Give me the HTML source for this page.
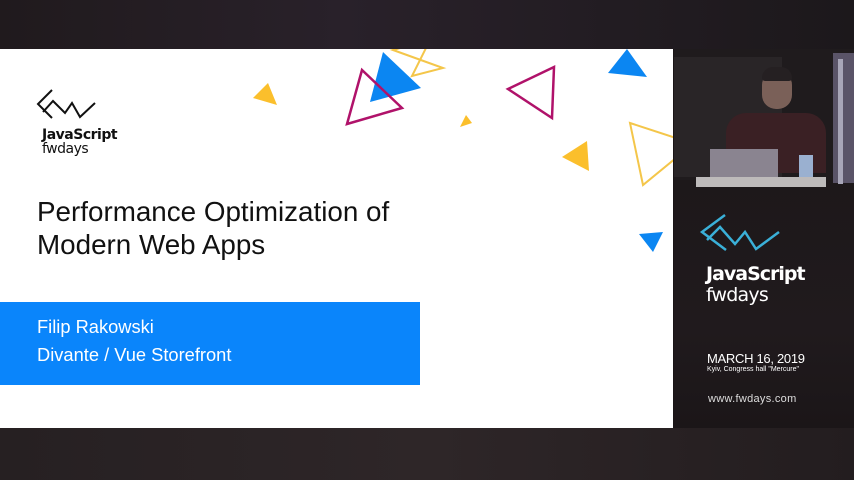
<!DOCTYPE html>
<html><head><style>
body{margin:0;width:854px;height:480px;overflow:hidden;background:#1a1517;font-family:"Liberation Sans",sans-serif;position:relative}
.a{position:absolute}
</style></head><body>
<div class="a" style="left:0;top:0;width:854px;height:49px;background:linear-gradient(90deg,#201a1d,#29212a 40%,#1c181b)"></div>
<div class="a" style="left:0;top:428px;width:854px;height:52px;background:linear-gradient(90deg,#262022,#2e2628 50%,#231d1f)"></div>
<div class="a" style="left:674px;top:180px;width:180px;height:248px;background:linear-gradient(180deg,#1d181a,#201a1d 60%,#1b1618)"></div>
<!-- video -->
<div class="a" style="left:674px;top:49px;width:180px;height:131px;background:#1f1b1d">
 <div class="a" style="left:0;top:8px;width:108px;height:120px;background:#292527"></div>
 <div class="a" style="left:159px;top:4px;width:21px;height:130px;background:#5a5468"></div>
 <div class="a" style="left:164px;top:10px;width:5px;height:125px;background:#a8a6b8"></div>
 <div class="a" style="left:88px;top:22px;width:30px;height:38px;border-radius:14px;background:#7a6058"></div>
 <div class="a" style="left:88px;top:18px;width:30px;height:14px;border-radius:14px 14px 4px 4px;background:#252022"></div>
 <div class="a" style="left:52px;top:64px;width:100px;height:60px;border-radius:20px 20px 0 0;background:#3a2024"></div>
 <div class="a" style="left:36px;top:100px;width:68px;height:30px;background:#8a8490"></div>
 <div class="a" style="left:125px;top:106px;width:14px;height:22px;background:#9ab0d0"></div>
 <div class="a" style="left:22px;top:128px;width:130px;height:10px;background:#bdbaba"></div>
</div>
<!-- slide -->
<div class="a" style="left:0;top:49px;width:673px;height:379px;background:#fff;overflow:hidden"></div>
<svg class="a" style="left:0;top:0" width="854" height="480">
 <defs><clipPath id="c"><rect x="0" y="49" width="673" height="379"/></clipPath></defs>
 <g clip-path="url(#c)">
 <polygon points="253,98 268,83 277,105" fill="#fbbf2c"/>
 <polygon points="393,50 443,68 412,76 430,40" fill="none" stroke="#f4c64a" stroke-width="2"/>
 <polygon points="370,102 383,52 421,88" fill="#0b86f2"/>
 <polygon points="362,70 402,108 347,124" fill="none" stroke="#b0126a" stroke-width="2.5"/>
 <polygon points="460,127 466,115 472,123" fill="#fbbf2c"/>
 <polygon points="508,89 554,67 552,118" fill="none" stroke="#b0126a" stroke-width="2.5"/>
 <polygon points="608,73 627,49 647,77" fill="#0b86f2"/>
 <polygon points="562,157 587,141 589,171" fill="#fbbf2c"/>
 <polygon points="630,123 676,138 676,158 643,185" fill="none" stroke="#f4c64a" stroke-width="2"/>
 <polygon points="639,234 663,232 653,252" fill="#0b86f2"/>
 <path d="M52,90 L38,104 L52,118 M43,112 L53,101 L65,113 L72,103 L80,117 L95,103" fill="none" stroke="#111" stroke-width="2"/>
 </g>
 <path d="M725,215 L702,232 L726,250 M707,240 L720,227 L735,244 L745,232 L756,249 L779,232" fill="none" stroke="#3ab0d8" stroke-width="2.5"/>
</svg>
<div class="a" style="left:42px;top:127px;font-size:14px;font-weight:bold;color:#111;font-family:'DejaVu Sans',sans-serif;letter-spacing:-0.5px">JavaScript</div>
<div class="a" style="left:42px;top:141px;font-size:14px;color:#111;font-family:'DejaVu Sans',sans-serif;letter-spacing:-0.5px">fwdays</div>
<div class="a" style="left:37px;top:195px;font-size:27.8px;line-height:33px;color:#111">Performance Optimization of<br>Modern Web Apps</div>
<div class="a" style="left:0;top:302px;width:420px;height:83px;background:#0a85fb"></div>
<div class="a" style="left:37px;top:313px;font-size:18.3px;line-height:28px;color:#fff">Filip Rakowski<br>Divante / Vue Storefront</div>
<div class="a" style="left:706px;top:264px;font-size:19px;font-weight:bold;color:#fff;font-family:'DejaVu Sans',sans-serif;letter-spacing:-1px;line-height:21px">JavaScript</div>
<div class="a" style="left:706px;top:285px;font-size:19px;color:#fff;font-family:'DejaVu Sans',sans-serif;letter-spacing:-0.8px;line-height:21px">fwdays</div>
<div class="a" style="left:707px;top:351px;font-size:13px;color:#fff;letter-spacing:-0.3px">MARCH 16, 2019</div>
<div class="a" style="left:707px;top:366px;font-size:7px;color:#fff">Kyiv, Congress hall "Mercure"</div>
<div class="a" style="left:708px;top:393px;font-size:11px;color:#ddd;letter-spacing:0.3px">www.fwdays.com</div>
</body></html>
